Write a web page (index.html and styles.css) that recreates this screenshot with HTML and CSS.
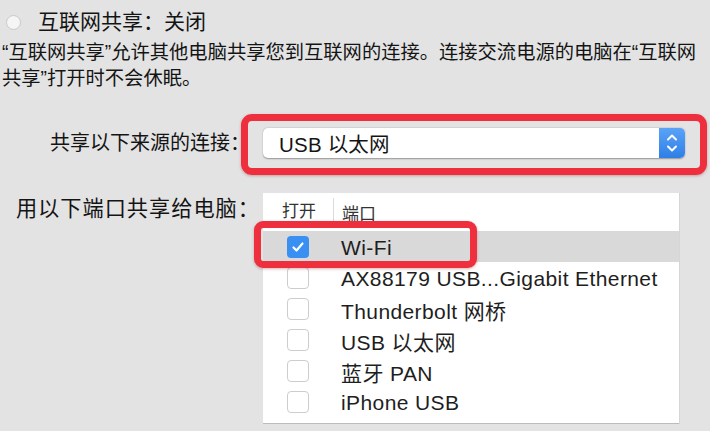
FILE: index.html
```html
<!DOCTYPE html>
<html lang="zh-CN">
<head>
<meta charset="utf-8">
<link rel="stylesheet" href="styles.css">
</head>
<body>
<div class="status">
  <span class="radio"></span>
  <span class="title">互联网共享：关闭</span>
</div>
<p class="desc">“互联网共享”允许其他电脑共享您到互联网的连接。连接交流电源的电脑在“互联网<br>共享”打开时不会休眠。</p>
<div class="form">
  <div class="label label-src">共享以下来源的连接：</div>
  <div class="popup">
    <span class="popup-text">USB 以太网</span>
    <span class="stepper">
      <svg width="26" height="30" viewBox="0 0 26 30"><path d="M9 11.5 L13 7.5 L17 11.5" fill="none" stroke="#fff" stroke-width="2" stroke-linecap="round" stroke-linejoin="round"/><path d="M9 18.5 L13 22.5 L17 18.5" fill="none" stroke="#fff" stroke-width="2" stroke-linecap="round" stroke-linejoin="round"/></svg>
    </span>
  </div>
  <div class="mark mark-src"></div>
  <div class="label label-ports">用以下端口共享给电脑：</div>
  <div class="table">
    <div class="thead">
      <div class="th th-on">打开</div>
      <div class="th th-port">端口</div>
    </div>
    <div class="row selected"><span class="cell-check"><span class="cb checked"><svg width="22" height="22" viewBox="0 0 22 22"><path d="M6.5 11.5 L9.5 14.5 L15.5 7.5" fill="none" stroke="#fff" stroke-width="2.2" stroke-linecap="round" stroke-linejoin="round"/></svg></span></span><span class="cell-name">Wi-Fi</span></div>
    <div class="row"><span class="cell-check"><span class="cb"></span></span><span class="cell-name">AX88179 USB...Gigabit Ethernet</span></div>
    <div class="row"><span class="cell-check"><span class="cb"></span></span><span class="cell-name">Thunderbolt 网桥</span></div>
    <div class="row"><span class="cell-check"><span class="cb"></span></span><span class="cell-name">USB 以太网</span></div>
    <div class="row"><span class="cell-check"><span class="cb"></span></span><span class="cell-name">蓝牙 PAN</span></div>
    <div class="row"><span class="cell-check"><span class="cb"></span></span><span class="cell-name">iPhone USB</span></div>
    <div class="mark mark-wifi"></div>
  </div>
</div>
</body>
</html>
```
FILE: styles.css
```css
html, body {
  margin: 0;
  padding: 0;
}
body {
  width: 710px;
  height: 431px;
  overflow: hidden;
  background: #e3e3e3;
  font-family: "Liberation Sans", "Noto Sans CJK SC", sans-serif;
  color: #141414;
}
.status {
  display: flex;
  align-items: center;
  gap: 17px;
  padding: 9px 0 0 6px;
  height: 26px;
}
.radio {
  width: 13px;
  height: 13px;
  border-radius: 50%;
  background: #f5f5f5;
  border: 1px solid #c9c9c9;
}
.title {
  font-size: 21px;
  line-height: 26px;
}
.desc {
  margin: 5px 0 0 2px;
  font-size: 19.3px;
  line-height: 26px;
  white-space: nowrap;
}
.form {
  position: relative;
  display: grid;
  grid-template-columns: 263px 1fr;
  margin-top: 36px;
  row-gap: 35px;
}
.label {
  line-height: 26px;
  text-align: right;
}
.label-src {
  align-self: center;
  font-size: 20px;
  padding-right: 13px;
}
.label-ports {
  margin-top: 3px;
  font-size: 21.2px;
  letter-spacing: 1px;
  padding-right: 3px;
}
.popup {
  width: 422px;
  height: 30px;
  background: #fff;
  border-radius: 5px;
  box-shadow: 0 0.5px 1.5px rgba(0,0,0,0.35);
  display: flex;
  align-items: center;
  justify-content: space-between;
}
.popup-text {
  padding-left: 16px;
  font-size: 20.5px;
  letter-spacing: 0.2px;
}
.stepper {
  width: 26px;
  height: 30px;
  border-radius: 0 5px 5px 0;
  background: linear-gradient(#5aa3f7, #2f7fe6);
  display: flex;
}
.mark {
  position: absolute;
  border: 7px solid #ee2f3d;
  box-shadow: 0 1px 3px rgba(120,0,0,0.3);
  pointer-events: none;
}
.mark-src {
  left: 241px;
  top: -14px;
  width: 452px;
  height: 47px;
  border-radius: 11px;
}
.table {
  position: relative;
  width: 416px;
  height: 230px;
  background: #fff;
  border-bottom: 1px solid #bcbcbc;
  box-shadow: 1px 0 0 #d6d6d6;
}
.thead {
  display: flex;
  height: 38px;
  align-items: center;
  font-size: 17px;
  color: #333;
}
.th-on {
  width: 71px;
  box-sizing: border-box;
  padding-left: 19px;
  border-right: 1px solid #dadada;
  line-height: 28px;
}
.th-port {
  padding-left: 8px;
}
.row {
  display: flex;
  align-items: center;
  height: 31px;
}
.row.selected {
  background: #d9d9d9;
}
.cell-check {
  width: 71px;
  box-sizing: border-box;
  padding-left: 24px;
  display: flex;
}
.cb {
  width: 22px;
  height: 22px;
  box-sizing: border-box;
  border-radius: 4px;
  background: #fff;
  border: 1px solid #cdcdcd;
  display: flex;
}
.cb.checked {
  background: #3a8ff3;
  border: none;
}
.cell-name {
  padding-left: 7px;
  font-size: 21px;
  letter-spacing: 0.4px;
  color: #1e1e1e;
  position: relative;
  top: 1px;
}
.mark-wifi {
  left: -9px;
  top: 28px;
  width: 209px;
  height: 33px;
  border-radius: 9px;
}
```
